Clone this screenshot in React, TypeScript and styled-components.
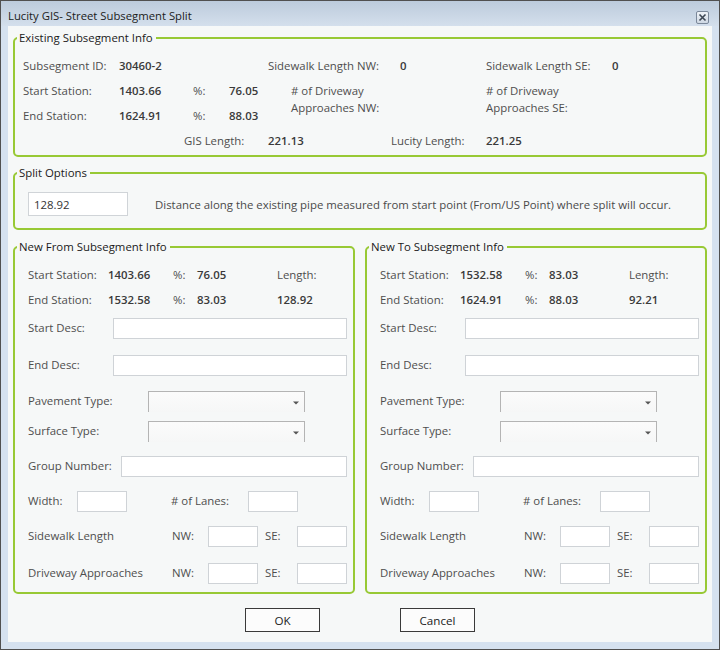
import React from "react";
import styled, { createGlobalStyle } from "styled-components";

const GlobalStyle = createGlobalStyle`
  html, body { margin: 0; padding: 0; background: #ffffff; }
  body { font-family: "Open Sans", "Noto Sans", sans-serif; font-size: 11.4px; }
  * { box-sizing: border-box; }
`;

const Window = styled.div`
  width: 720px;
  height: 650px;
  border: 1px solid #505050;
  background: #d5e1ef;
  display: flex;
  flex-direction: column;
`;

const TitleBar = styled.div`
  height: 25px;
  flex: none;
  display: flex;
  justify-content: space-between;
  align-items: flex-start;
  padding: 7px 10px 0 7px;
  background: linear-gradient(to bottom, #bccbdc, #d4dfec);
`;

const Title = styled.span`
  font-size: 11.3px;
  line-height: 16px;
  color: #1b1b1b;
`;

const CloseBtn = styled.div`
  width: 13px;
  height: 13px;
  margin-top: 3px;
  border: 1px solid #7b889a;
  border-radius: 2px;
  background: linear-gradient(to bottom, #eef2f7, #cfd8e3);
  display: flex;
  align-items: center;
  justify-content: center;
`;

const Content = styled.div`
  flex: 1;
  margin: 0 7px 7px;
  background: #f6f8f8;
  padding: 4px 5px 10px;
  display: flex;
  flex-direction: column;
`;

const Group = styled.fieldset<{ $mt?: number }>`
  margin: ${(p) => p.$mt ?? 0}px 0 0;
  padding: 0;
  border: 2px solid #98c935;
  border-radius: 5px;
  min-width: 0;
`;

const Legend = styled.legend`
  margin-left: 2px;
  padding: 0 3px 0 2px;
  font-size: 11.4px;
  line-height: 16px;
  color: #1a1a1a;
`;

const InfoGrid = styled.div`
  display: grid;
  grid-template-columns: 96px 74px 36px 39px 132px 86px 126px 1fr;
  grid-auto-rows: 25px;
  align-items: center;
  padding: 7px 8px 2px;
`;

const Cell = styled.span<{ $col?: string; $row?: string; $pl?: number; $bold?: boolean }>`
  grid-column: ${(p) => p.$col ?? "auto"};
  grid-row: ${(p) => p.$row ?? "auto"};
  padding-left: ${(p) => p.$pl ?? 0}px;
  white-space: nowrap;
  color: ${(p) => (p.$bold ? "#3a3a3a" : "#4e4e4e")};
  font-weight: ${(p) => (p.$bold ? 600 : 400)};
`;

const TwoLine = styled.span<{ $col: string; $pl?: number }>`
  grid-column: ${(p) => p.$col};
  grid-row: 2 / span 2;
  align-self: start;
  padding-top: 4px;
  padding-left: ${(p) => p.$pl ?? 0}px;
  line-height: 17px;
  color: #4e4e4e;
  white-space: nowrap;
`;

const SplitBody = styled.div`
  display: flex;
  align-items: center;
  gap: 27px;
  padding: 11px 13px 12px;
`;

const SplitInput = styled.input`
  width: 100px;
  height: 24px;
  border: 1px solid #d0d4d8;
  background: #ffffff;
  padding: 0 5px;
  font-family: inherit;
  font-size: 11.4px;
  color: #333;
  outline: none;
`;

const Note = styled.span`
  color: #4a4a4a;
  white-space: nowrap;
`;

const Panels = styled.div`
  display: grid;
  grid-template-columns: 1fr 1fr;
  gap: 10px;
  margin-top: 9px;
`;

const PanelBody = styled.div`
  padding: 7px 6px 8px 13px;
`;

const StatGrid = styled.div`
  display: grid;
  grid-template-columns: 80px 65px 24px 80px 1fr;
  grid-auto-rows: 25px;
  align-items: center;
`;

const FieldRow = styled.div<{ $cols: string; $mt: number }>`
  display: grid;
  grid-template-columns: ${(p) => p.$cols};
  align-items: center;
  margin-top: ${(p) => p.$mt}px;
  height: 21px;
`;

const FieldLabel = styled.span<{ $pl?: number }>`
  color: #4e4e4e;
  white-space: nowrap;
  padding-bottom: 2px;
  padding-left: ${(p) => p.$pl ?? 0}px;
`;

const TextBox = styled.input`
  width: 100%;
  height: 21px;
  border: 1px solid #cfd3d7;
  background: #ffffff;
  outline: none;
  padding: 0 4px;
`;

const Combo = styled.div`
  height: 21px;
  border: 1px solid #b4b4b4;
  border-bottom: none;
  background: linear-gradient(to bottom, #fbfbfb, #f6f7f7);
  display: flex;
  align-items: center;
  justify-content: flex-end;
  padding: 1px 5px 0 0;
`;

const Buttons = styled.div`
  display: flex;
  justify-content: center;
  gap: 80px;
  margin-top: 14px;
`;

const Button = styled.button`
  width: 75px;
  height: 24px;
  border: 1px solid #3a3a3a;
  background: #fcfcfc;
  font-family: inherit;
  font-size: 11.6px;
  color: #222;
  padding: 0;
`;

const Arrow = () => (
  <svg width="6" height="4" viewBox="0 0 6 4">
    <polygon points="0,0.5 6,0.5 3,3.5" fill="#555" />
  </svg>
);

type PanelProps = {
  title: string;
  start: string;
  end: string;
  startPct: string;
  endPct: string;
  length: string;
};

const SubPanel = ({ title, start, end, startPct, endPct, length }: PanelProps) => (
  <Group>
    <Legend>{title}</Legend>
    <PanelBody>
      <StatGrid>
        <Cell>Start Station:</Cell>
        <Cell $bold>{start}</Cell>
        <Cell>%:</Cell>
        <Cell $bold>{startPct}</Cell>
        <Cell>Length:</Cell>
        <Cell>End Station:</Cell>
        <Cell $bold>{end}</Cell>
        <Cell>%:</Cell>
        <Cell $bold>{endPct}</Cell>
        <Cell $bold>{length}</Cell>
      </StatGrid>
      <FieldRow $cols="85px 1fr" $mt={6}>
        <FieldLabel>Start Desc:</FieldLabel>
        <TextBox />
      </FieldRow>
      <FieldRow $cols="85px 1fr" $mt={16}>
        <FieldLabel>End Desc:</FieldLabel>
        <TextBox />
      </FieldRow>
      <FieldRow $cols="120px 157px" $mt={15}>
        <FieldLabel>Pavement Type:</FieldLabel>
        <Combo>
          <Arrow />
        </Combo>
      </FieldRow>
      <FieldRow $cols="120px 157px" $mt={9}>
        <FieldLabel>Surface Type:</FieldLabel>
        <Combo>
          <Arrow />
        </Combo>
      </FieldRow>
      <FieldRow $cols="93px 1fr" $mt={14}>
        <FieldLabel>Group Number:</FieldLabel>
        <TextBox />
      </FieldRow>
      <FieldRow $cols="49px 50px 44px 77px 50px" $mt={14}>
        <FieldLabel>Width:</FieldLabel>
        <TextBox />
        <span />
        <FieldLabel># of Lanes:</FieldLabel>
        <TextBox />
      </FieldRow>
      <FieldRow $cols="144px 36px 50px 39px 50px" $mt={14}>
        <FieldLabel>Sidewalk Length</FieldLabel>
        <FieldLabel>NW:</FieldLabel>
        <TextBox />
        <FieldLabel $pl={7}>SE:</FieldLabel>
        <TextBox />
      </FieldRow>
      <FieldRow $cols="144px 36px 50px 39px 50px" $mt={16}>
        <FieldLabel>Driveway Approaches</FieldLabel>
        <FieldLabel>NW:</FieldLabel>
        <TextBox />
        <FieldLabel $pl={7}>SE:</FieldLabel>
        <TextBox />
      </FieldRow>
    </PanelBody>
  </Group>
);

export default function App() {
  return (
    <>
      <GlobalStyle />
      <Window>
        <TitleBar>
          <Title>Lucity GIS- Street Subsegment Split</Title>
          <CloseBtn>
            <svg width="9" height="9" viewBox="0 0 9 9">
              <path d="M1.5 1.5 L7.5 7.5 M7.5 1.5 L1.5 7.5" stroke="#3d4653" strokeWidth="1.6" />
            </svg>
          </CloseBtn>
        </TitleBar>
        <Content>
          <Group>
            <Legend>Existing Subsegment Info</Legend>
            <InfoGrid>
              <Cell $col="1">Subsegment ID:</Cell>
              <Cell $col="2" $bold>30460-2</Cell>
              <Cell $col="5">Sidewalk Length NW:</Cell>
              <Cell $col="6" $bold>0</Cell>
              <Cell $col="7">Sidewalk Length SE:</Cell>
              <Cell $col="8" $bold>0</Cell>

              <Cell $col="1" $row="2">Start Station:</Cell>
              <Cell $col="2" $row="2" $bold>1403.66</Cell>
              <Cell $col="3" $row="2">%:</Cell>
              <Cell $col="4" $row="2" $bold>76.05</Cell>
              <TwoLine $col="5" $pl={23}>
                # of Driveway
                <br />
                Approaches NW:
              </TwoLine>
              <TwoLine $col="7">
                # of Driveway
                <br />
                Approaches SE:
              </TwoLine>

              <Cell $col="1" $row="3">End Station:</Cell>
              <Cell $col="2" $row="3" $bold>1624.91</Cell>
              <Cell $col="3" $row="3">%:</Cell>
              <Cell $col="4" $row="3" $bold>88.03</Cell>

              <Cell $col="2 / 5" $row="4" $pl={65}>GIS Length:</Cell>
              <Cell $col="5" $row="4" $bold>221.13</Cell>
              <Cell $col="5 / 7" $row="4" $pl={123}>Lucity Length:</Cell>
              <Cell $col="7" $row="4" $bold>221.25</Cell>
            </InfoGrid>
          </Group>

          <Group $mt={8}>
            <Legend>Split Options</Legend>
            <SplitBody>
              <SplitInput defaultValue="128.92" />
              <Note>
                Distance along the existing pipe measured from start point (From/US Point) where split will occur.
              </Note>
            </SplitBody>
          </Group>

          <Panels>
            <SubPanel
              title="New From Subsegment Info"
              start="1403.66"
              end="1532.58"
              startPct="76.05"
              endPct="83.03"
              length="128.92"
            />
            <SubPanel
              title="New To Subsegment Info"
              start="1532.58"
              end="1624.91"
              startPct="83.03"
              endPct="88.03"
              length="92.21"
            />
          </Panels>

          <Buttons>
            <Button>OK</Button>
            <Button>Cancel</Button>
          </Buttons>
        </Content>
      </Window>
    </>
  );
}
